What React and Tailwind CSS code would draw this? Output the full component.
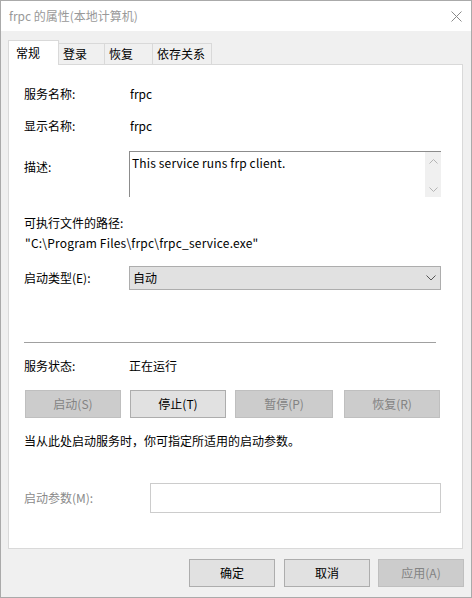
const font = { fontFamily: '"Noto Sans CJK SC", sans-serif' }

function Tab({ label, active, w }) {
  if (active) return (
    <div className={`${w} h-[25px] relative z-10 -mb-px bg-white border border-b-0 border-[#d9d9d9] flex items-center pl-[7px] text-black`}>
      {label}
    </div>
  )
  return (
    <div className={`${w} h-[21px] bg-[#f0f0f0] border border-l-0 border-b-0 border-[#d9d9d9] flex items-center pl-[4px] text-black`}>
      {label}
    </div>
  )
}

function Btn({ children, disabled, w = 'w-[96px]', className = '' }) {
  return (
    <div className={`${w} h-[28px] flex items-center justify-center border ${className}
      ${disabled ? 'bg-[#cccccc] border-[#bfbfbf] text-[#838383]' : 'bg-[#e1e1e1] border-[#adadad] text-black'}`}>
      {children}
    </div>
  )
}

export default function App() {
  return (
    <div className="w-[472px] h-[598px] bg-[#f0f0f0] border border-[#aaaaaa] flex flex-col text-[12px] leading-[20px] overflow-hidden" style={font}>
      {/* barra de título */}
      <div className="h-[30px] bg-white flex items-center justify-between pl-[8px] pr-[9px] shrink-0">
        <span className="text-[#999999]">frpc 的属性(本地计算机)</span>
        <svg width="11" height="11" viewBox="0 0 11 11" className="text-[#8a8a8a]">
          <path d="M0.5 0.5 L10.5 10.5 M10.5 0.5 L0.5 10.5" stroke="currentColor" strokeWidth="1" fill="none" />
        </svg>
      </div>

      <div className="flex flex-col pt-[9px] pl-[7px] pr-[8px]">
        {/* pestañas */}
        <div className="flex items-end">
          <Tab label="常规" active w="w-[51px]" />
          <Tab label="登录" w="w-[46px]" />
          <Tab label="恢复" w="w-[48px]" />
          <Tab label="依存关系" w="w-[59px]" />
        </div>

        {/* panel */}
        <div className="h-[485px] bg-white border border-[#d9d9d9] flex flex-col pl-[15px] text-black">
          <div className="flex h-[20px] items-center mt-[19px]">
            <span className="w-[106px]">服务名称:</span><span>frpc</span>
          </div>
          <div className="flex h-[20px] items-center mt-[12px]">
            <span className="w-[106px]">显示名称:</span><span>frpc</span>
          </div>
          <div className="flex mt-[15px]">
            <span className="w-[105px] mt-[6px]">描述:</span>
            <div className="w-[312px] h-[46px] border-t border-l border-[#8c8c8c] flex">
              <div className="flex-1 pl-[2px] pt-[1px] tracking-[0.15px]">This service runs frp client.</div>
              <div className="w-[16px] bg-[#f0f0f0] flex flex-col items-center justify-between pt-[7px] pb-[5px]">
                <svg width="9" height="5" viewBox="0 0 9 5"><path d="M0.5 4.5 L4.5 0.5 L8.5 4.5" stroke="#b4b4b4" fill="none" /></svg>
                <svg width="9" height="5" viewBox="0 0 9 5"><path d="M0.5 0.5 L4.5 4.5 L8.5 0.5" stroke="#b4b4b4" fill="none" /></svg>
              </div>
            </div>
          </div>
          <div className="h-[20px] mt-[16px]">可执行文件的路径:</div>
          <div className="h-[20px] pl-px tracking-[0.2px]">"C:\Program Files\frpc\frpc_service.exe"</div>
          <div className="flex items-center mt-[13px]">
            <span className="w-[105px]">启动类型(E):</span>
            <div className="w-[312px] h-[24px] bg-[#e1e1e1] border border-[#adadad] flex items-center justify-between pl-[3px] pr-[4px]">
              <span>自动</span>
              <svg width="10" height="6" viewBox="0 0 10 6"><path d="M0.5 0.5 L5 5 L9.5 0.5" stroke="#555" fill="none" /></svg>
            </div>
          </div>
          <div className="w-[412px] h-px bg-[#a0a0a0] mt-[52px]" />
          <div className="flex h-[20px] items-center mt-[13px]">
            <span className="w-[105px]">服务状态:</span><span>正在运行</span>
          </div>
          <div className="flex mt-[14px] ml-px">
            <Btn disabled>启动(S)</Btn>
            <Btn className="ml-[9px]">停止(T)</Btn>
            <Btn disabled w="w-[98px]" className="ml-[9px]">暂停(P)</Btn>
            <Btn disabled className="ml-[11px]">恢复(R)</Btn>
          </div>
          <div className="h-[20px] mt-[13px]">当从此处启动服务时，你可指定所适用的启动参数。</div>
          <div className="flex items-center mt-[32px]">
            <span className="w-[126px] text-[#8a8a8a]">启动参数(M):</span>
            <div className="w-[291px] h-[30px] border border-[#cccccc] bg-white" />
          </div>
        </div>

        {/* botones inferiores */}
        <div className="flex justify-end mt-[10px]">
          <Btn w="w-[86px]">确定</Btn>
          <Btn w="w-[86px]" className="ml-[9px]">取消</Btn>
          <Btn w="w-[86px]" disabled className="ml-[8px] -mr-[1px]">应用(A)</Btn>
        </div>
      </div>
    </div>
  )
}
